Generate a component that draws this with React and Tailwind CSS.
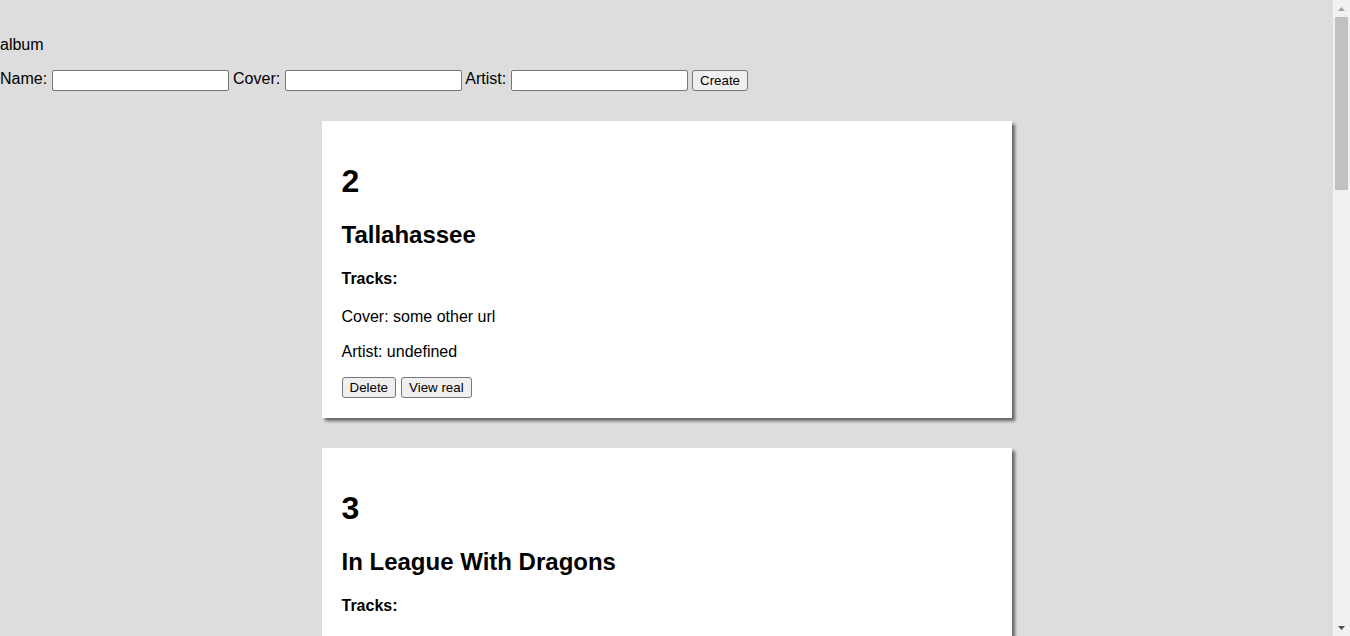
const ALBUMS = [
  { id: 2, name: "Tallahassee", cover: "some other url", artist: "undefined", tracks: [] },
  { id: 3, name: "In League With Dragons", cover: "some url", artist: "undefined", tracks: [] },
  { id: 4, name: "The Sunset Tree", cover: "another url", artist: "undefined", tracks: ["Dance Music", "This Year", "Broom People"] },
  { id: 5, name: "Goths", cover: "url", artist: "undefined", tracks: [] },
  { id: 6, name: "Beat the Champ", cover: "some url", artist: "undefined", tracks: [] },
  { id: 7, name: "Transcendental Youth", cover: "some url", artist: "undefined", tracks: [] },
];

function Field({ label }) {
  return (
    <>
      {label}:{" "}
      <input
        type="text"
        className="w-[177px] h-[21px] px-[2px] py-[1px] bg-white border border-[#767676] rounded-[2px] text-[13.33px] align-middle"
      />{" "}
    </>
  );
}

function Btn({ children }) {
  return (
    <button className="h-[21px] px-[7px] bg-[#efefef] border border-[#767676] rounded-[3px] text-[13.33px] leading-[15px] text-black align-middle">
      {children}
    </button>
  );
}

function AlbumCard({ album }) {
  return (
    <div className="w-[690px] mx-auto mb-[30px] bg-white p-[20px] shadow-[3px_3px_3px_rgba(0,0,0,0.55)] flow-root">
      <h1 className="text-[32px] font-bold leading-[36.8px] my-[21.44px]">{album.id}</h1>
      <h2 className="text-[24px] font-bold leading-[27.6px] mt-[21.44px] mb-[19.92px]">{album.name}</h2>
      <h4 className="text-[16px] font-bold leading-[18.4px] mt-[21.28px] mb-[20px]">Tracks:</h4>
      {album.tracks.length > 0 && (
        <ul className="list-disc pl-[40px] my-[16px]">
          {album.tracks.map((t) => (
            <li key={t} className="leading-[18.4px]">{t}</li>
          ))}
        </ul>
      )}
      <p className="leading-[18.4px] my-[16px]">Cover: {album.cover}</p>
      <p className="leading-[18.4px] my-[16px]">Artist: {album.artist}</p>
      <div className="flex gap-[5px] h-[21px]">
        <Btn>Delete</Btn>
        <Btn>View real</Btn>
      </div>
    </div>
  );
}

// fake classic scrollbar (page scrolled to top)
function Scrollbar() {
  return (
    <div className="w-[17px] h-full shrink-0 bg-[#f1f1f1] flex flex-col items-center">
      <div className="h-[17px] w-full flex items-center justify-center">
        <svg width="7" height="4" viewBox="0 0 7 4">
          <path d="M3.5 0L7 4H0z" fill="#a3a3a3" />
        </svg>
      </div>
      <div className="w-[13px] h-[173px] bg-[#c1c1c1]" />
      <div className="flex-1" />
      <div className="h-[17px] w-full flex items-center justify-center">
        <svg width="7" height="4" viewBox="0 0 7 4">
          <path d="M0 0H7L3.5 4z" fill="#505050" />
        </svg>
      </div>
    </div>
  );
}

export default function App() {
  return (
    <div
      className="h-screen flex bg-[#dddddd] text-black text-[16px] overflow-hidden"
      style={{ fontFamily: "'Liberation Sans', Arial, sans-serif" }}
    >
      <main className="flex-1 min-w-0 h-full overflow-hidden pt-[36px]">
        <div className="leading-[18.4px]">album</div>
        <form className="mt-[14px] h-[21px] leading-[21px] whitespace-nowrap" onSubmit={(e) => e.preventDefault()}>
          <Field label="Name" />
          <Field label="Cover" />
          <Field label="Artist" />
          <Btn>Create</Btn>
        </form>
        <div className="mt-[32px]">
          {ALBUMS.map((a) => (
            <AlbumCard key={a.id} album={a} />
          ))}
        </div>
      </main>
      <Scrollbar />
    </div>
  );
}
